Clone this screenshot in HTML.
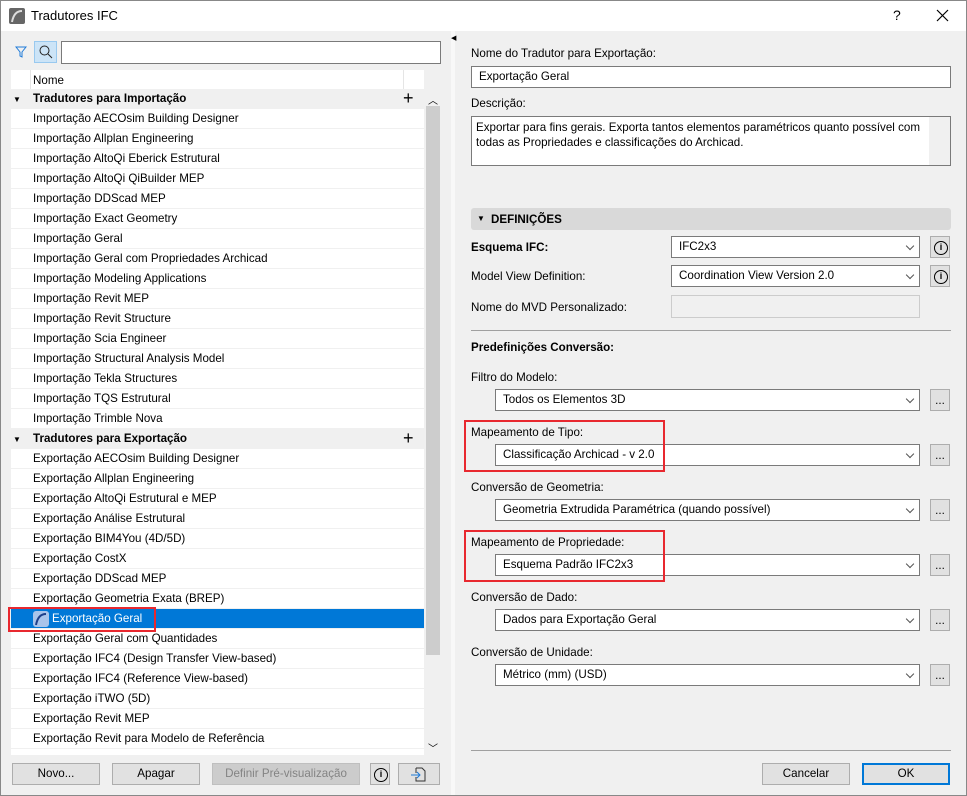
<!DOCTYPE html>
<html><head><meta charset="utf-8"><style>
*{box-sizing:border-box;margin:0;padding:0}
body{width:967px;height:796px;overflow:hidden;background:#f0f0f0;font-family:"Liberation Sans",sans-serif;font-size:11.6px;color:#000;position:relative}
.a{position:absolute}
.title{left:0;top:0;width:967px;height:31px;background:#fff;border:1px solid #888;border-bottom:none}
.row{position:absolute;left:11px;width:413px;height:20px;line-height:20px;padding-left:22px;background:#fff;border-bottom:1px solid #f0f0f0;white-space:nowrap}
.grp{background:#f0f0f0;font-weight:bold;border-bottom:none}
.btn{position:absolute;height:22px;background:#e1e1e1;border:1px solid #adadad;text-align:center;line-height:20px}
.inp{position:absolute;background:#fff;border:1px solid #7a7a7a;height:22px;line-height:20px;padding-left:7px;white-space:nowrap}
.sel::after{content:"";position:absolute;right:6px;top:6px;width:5px;height:5px;border-right:1px solid #555;border-bottom:1px solid #555;transform:rotate(45deg)}
.dots{position:absolute;width:20px;height:22px;background:#e1e1e1;border:1px solid #adadad;text-align:center;line-height:22px}
.info{position:absolute;width:20px;height:22px;background:#e1e1e1;border:1px solid #adadad}
.info::after{content:"i";position:absolute;left:3px;top:4px;width:12px;height:12px;border:1px solid #000;border-radius:50%;font-size:9px;line-height:11px;text-align:center;font-weight:bold}
.lbl{position:absolute;white-space:nowrap}
.red{position:absolute;border:2px solid #e8282f}
</style></head><body>
<div class="a title"></div>
<svg class="a" style="left:9px;top:8px" width="16" height="16"><rect width="16" height="16" rx="2" fill="#666"/><path d="M3 14 Q5 3 13 3" stroke="#ddd" stroke-width="2" fill="none"/></svg>
<div class="lbl" style="left:31px;top:8px;font-size:13px">Tradutores IFC</div>
<div class="lbl" style="left:893px;top:7px;font-size:14px">?</div>
<svg class="a" style="left:936px;top:9px" width="13" height="13"><path d="M1 1 L12 12 M12 1 L1 12" stroke="#000" stroke-width="1.2"/></svg>
<div class="a" style="left:0;top:31px;width:1px;height:765px;background:#888"></div>
<div class="a" style="left:966px;top:31px;width:1px;height:765px;background:#888"></div>
<div class="a" style="left:0;top:795px;width:967px;height:1px;background:#888"></div>

<svg class="a" style="left:15px;top:45px" width="12" height="14"><path d="M1 2 H11 L7 7 V12 L5 11 V7 Z" fill="none" stroke="#1e7ad8"/></svg>
<div class="a" style="left:34px;top:41px;width:23px;height:22px;background:#cce4f7;border:1px solid #99c9ef"></div>
<svg class="a" style="left:38px;top:44px" width="16" height="16"><circle cx="6.5" cy="6.5" r="4.5" fill="none" stroke="#222"/><path d="M10 10 L14 14" stroke="#222"/></svg>
<div class="inp" style="left:61px;top:41px;width:380px;height:23px"></div>

<div class="a" style="left:11px;top:70px;width:413px;height:19px;background:#fff"></div>
<div class="lbl" style="left:33px;top:74px">Nome</div>
<div class="a" style="left:30px;top:70px;width:1px;height:19px;background:#e5e5e5"></div>
<div class="a" style="left:403px;top:70px;width:1px;height:19px;background:#e5e5e5"></div>

<div class="row grp" style="top:89px">Tradutores para Importação</div>
<div class="row" style="top:109px">Importação AECOsim Building Designer</div>
<div class="row" style="top:129px">Importação Allplan Engineering</div>
<div class="row" style="top:149px">Importação AltoQi Eberick Estrutural</div>
<div class="row" style="top:169px">Importação AltoQi QiBuilder MEP</div>
<div class="row" style="top:189px">Importação DDScad MEP</div>
<div class="row" style="top:209px">Importação Exact Geometry</div>
<div class="row" style="top:229px">Importação Geral</div>
<div class="row" style="top:249px">Importação Geral com Propriedades Archicad</div>
<div class="row" style="top:269px">Importação Modeling Applications</div>
<div class="row" style="top:289px">Importação Revit MEP</div>
<div class="row" style="top:309px">Importação Revit Structure</div>
<div class="row" style="top:329px">Importação Scia Engineer</div>
<div class="row" style="top:349px">Importação Structural Analysis Model</div>
<div class="row" style="top:369px">Importação Tekla Structures</div>
<div class="row" style="top:389px">Importação TQS Estrutural</div>
<div class="row" style="top:409px">Importação Trimble Nova</div>
<div class="row grp" style="top:429px">Tradutores para Exportação</div>
<div class="row" style="top:449px">Exportação AECOsim Building Designer</div>
<div class="row" style="top:469px">Exportação Allplan Engineering</div>
<div class="row" style="top:489px">Exportação AltoQi Estrutural e MEP</div>
<div class="row" style="top:509px">Exportação Análise Estrutural</div>
<div class="row" style="top:529px">Exportação BIM4You (4D/5D)</div>
<div class="row" style="top:549px">Exportação CostX</div>
<div class="row" style="top:569px">Exportação DDScad MEP</div>
<div class="row" style="top:589px">Exportação Geometria Exata (BREP)</div>
<div class="row" style="top:609px;background:#0078d7;color:#fff;padding-left:41px">Exportação Geral</div>
<svg class="a" style="left:33px;top:611px" width="16" height="16"><rect width="16" height="16" rx="3" fill="#a9c4ea"/><path d="M3 14 Q5 3 13 3" stroke="#1d3f8a" stroke-width="2" fill="none"/></svg>
<div class="row" style="top:629px">Exportação Geral com Quantidades</div>
<div class="row" style="top:649px">Exportação IFC4 (Design Transfer View-based)</div>
<div class="row" style="top:669px">Exportação IFC4 (Reference View-based)</div>
<div class="row" style="top:689px">Exportação iTWO (5D)</div>
<div class="row" style="top:709px">Exportação Revit MEP</div>
<div class="row" style="top:729px">Exportação Revit para Modelo de Referência</div>
<div class="a" style="left:11px;top:749px;width:413px;height:6px;background:#fff"></div>
<div class="lbl" style="left:13px;top:95px;font-size:8px">▼</div>
<div class="lbl" style="left:13px;top:435px;font-size:8px">▼</div>
<div class="lbl" style="left:403px;top:88px;font-size:18px;font-weight:300">+</div>
<div class="lbl" style="left:403px;top:428px;font-size:18px;font-weight:300">+</div>
<div class="a" style="left:426px;top:106px;width:14px;height:549px;background:#cdcdcd"></div>
<div class="lbl" style="left:428px;top:92px;font-size:10px">︿</div>
<div class="lbl" style="left:428px;top:740px;font-size:10px">﹀</div>
<div class="red" style="left:8px;top:607px;width:148px;height:25px"></div>

<div class="btn" style="left:12px;top:763px;width:88px">Novo...</div>
<div class="btn" style="left:112px;top:763px;width:88px">Apagar</div>
<div class="btn" style="left:212px;top:763px;width:148px;background:#ccc;border-color:#bfbfbf;color:#838383">Definir Pré-visualização</div>
<div class="info" style="left:370px;top:763px"></div>
<div class="btn" style="left:398px;top:763px;width:42px"></div>
<svg class="a" style="left:410px;top:765px" width="18" height="18"><path d="M6 3 H12 L15 6 V16 H6 V12 M6 8 V3" fill="none" stroke="#333"/><path d="M1 10 H10 M7 7 L10 10 L7 13" fill="none" stroke="#1e7ad8"/></svg>

<div class="a" style="left:451px;top:31px;width:4px;height:764px;background:#f8f8f8"></div>
<div class="lbl" style="left:451px;top:34px;font-size:7px">◀</div>

<div class="lbl" style="left:471px;top:47px">Nome do Tradutor para Exportação:</div>
<div class="inp" style="left:471px;top:66px;width:480px">Exportação Geral</div>
<div class="lbl" style="left:471px;top:97px">Descrição:</div>
<div class="inp" style="left:471px;top:116px;width:480px;height:50px;line-height:15px;padding-top:3px;padding-left:4px;white-space:normal;padding-right:20px">Exportar para fins gerais. Exporta tantos elementos paramétricos quanto possível com todas as Propriedades e classificações do Archicad.</div>
<div class="a" style="left:929px;top:117px;width:21px;height:48px;background:#f0f0f0"></div>

<div class="a" style="left:471px;top:208px;width:480px;height:22px;background:#d9d9d9;border-radius:3px"></div>
<div class="lbl" style="left:477px;top:214px;font-size:8px">▼</div>
<div class="lbl" style="left:491px;top:213px;font-weight:bold">DEFINIÇÕES</div>

<div class="lbl" style="left:471px;top:241px;font-weight:bold">Esquema IFC:</div>
<div class="inp sel" style="left:671px;top:236px;width:249px">IFC2x3</div>
<div class="info" style="left:930px;top:236px"></div>
<div class="lbl" style="left:471px;top:270px">Model View Definition:</div>
<div class="inp sel" style="left:671px;top:265px;width:249px">Coordination View Version 2.0</div>
<div class="info" style="left:930px;top:265px"></div>
<div class="lbl" style="left:471px;top:301px">Nome do MVD Personalizado:</div>
<div class="a" style="left:671px;top:295px;width:249px;height:23px;background:#f0f0f0;border:1px solid #ccc"></div>
<div class="a" style="left:471px;top:330px;width:480px;height:1px;background:#a0a0a0"></div>
<div class="lbl" style="left:471px;top:341px;font-weight:bold">Predefinições Conversão:</div>

<div class="lbl" style="left:471px;top:371px">Filtro do Modelo:</div>
<div class="inp sel" style="left:495px;top:389px;width:425px">Todos os Elementos 3D</div>
<div class="dots" style="left:930px;top:389px">...</div>
<div class="lbl" style="left:471px;top:426px">Mapeamento de Tipo:</div>
<div class="inp sel" style="left:495px;top:444px;width:425px">Classificação Archicad - v 2.0</div>
<div class="dots" style="left:930px;top:444px">...</div>
<div class="lbl" style="left:471px;top:481px">Conversão de Geometria:</div>
<div class="inp sel" style="left:495px;top:499px;width:425px">Geometria Extrudida Paramétrica (quando possível)</div>
<div class="dots" style="left:930px;top:499px">...</div>
<div class="lbl" style="left:471px;top:536px">Mapeamento de Propriedade:</div>
<div class="inp sel" style="left:495px;top:554px;width:425px">Esquema Padrão IFC2x3</div>
<div class="dots" style="left:930px;top:554px">...</div>
<div class="lbl" style="left:471px;top:591px">Conversão de Dado:</div>
<div class="inp sel" style="left:495px;top:609px;width:425px">Dados para Exportação Geral</div>
<div class="dots" style="left:930px;top:609px">...</div>
<div class="lbl" style="left:471px;top:646px">Conversão de Unidade:</div>
<div class="inp sel" style="left:495px;top:664px;width:425px">Métrico (mm) (USD)</div>
<div class="dots" style="left:930px;top:664px">...</div>
<div class="red" style="left:464px;top:420px;width:201px;height:52px"></div>
<div class="red" style="left:464px;top:530px;width:201px;height:52px"></div>

<div class="a" style="left:471px;top:750px;width:480px;height:1px;background:#a0a0a0"></div>
<div class="btn" style="left:762px;top:763px;width:88px">Cancelar</div>
<div class="btn" style="left:862px;top:763px;width:88px;border:2px solid #0078d7;line-height:18px">OK</div>
</body></html>
